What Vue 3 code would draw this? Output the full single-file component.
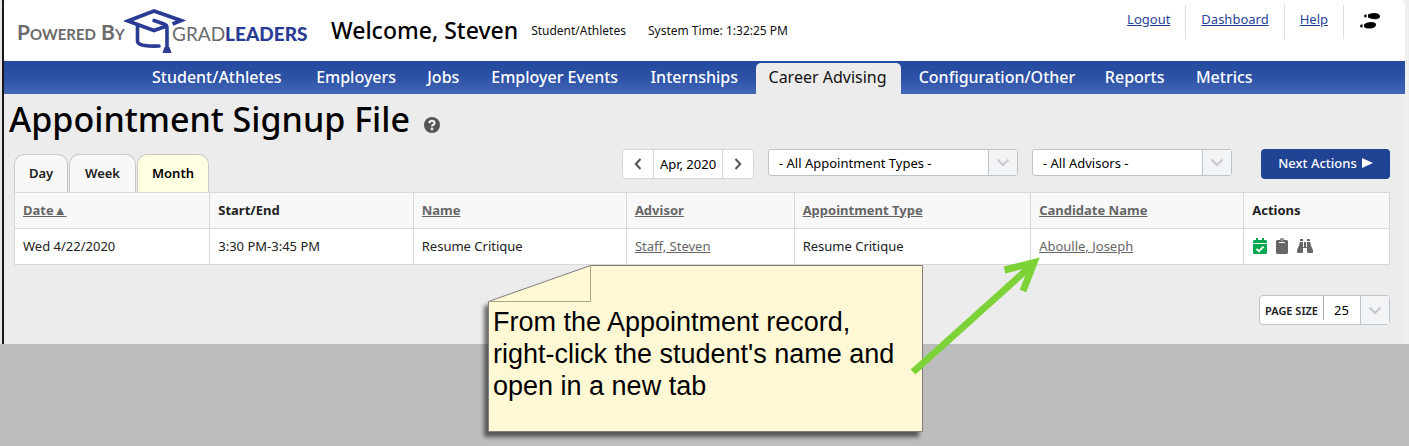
<script setup>
import { ref } from 'vue'

const navItems = ['Student/Athletes', 'Employers', 'Jobs', 'Employer Events', 'Internships', 'Career Advising', 'Configuration/Other', 'Reports', 'Metrics']
const activeNav = 'Career Advising'
const view = ref('Month')
const views = ['Day', 'Week', 'Month']
const columns = [
  { label: 'Date▲', sortable: true },
  { label: 'Start/End', sortable: false },
  { label: 'Name', sortable: true },
  { label: 'Advisor', sortable: true },
  { label: 'Appointment Type', sortable: true },
  { label: 'Candidate Name', sortable: true },
  { label: 'Actions', sortable: false },
]
</script>

<template>
  <div class="page">
    <div class="window">
      <header class="top">
        <a class="brand" href="#">
          <span class="powered">Powered By</span>
          <svg class="cap" viewBox="0 0 62 48" aria-hidden="true">
            <g fill="none" stroke="#2a3b94" stroke-width="3.6">
              <path d="M48.500 17L57 13.500L30 4L4 14L30 23.500L42.500 19" stroke-linejoin="miter" />
              <path d="M30 13.500L40 17Q43 18 43 21V41" stroke-linecap="round" />
              <path d="M13.500 18V34Q13.500 37 19 38.200Q27 39.500 35 39" stroke-linecap="round" />
            </g>
            <path d="M40.500 40H45.500L47.500 46H38.500Z" fill="#2a3b94" />
          </svg>
          <span class="wordmark">GRAD<b>LEADERS</b></span>
        </a>
        <strong class="welcome">Welcome, Steven</strong>
        <span class="meta">Student/Athletes</span>
        <span class="meta">System Time: 1:32:25 PM</span>
        <div class="links">
          <a href="#">Logout</a>
          <a href="#">Dashboard</a>
          <a href="#">Help</a>
          <a href="#" aria-label="Site tour">
            <svg class="steps" viewBox="0 0 22 18" aria-hidden="true">
              <path d="M9 2.500Q11 1 15 1Q21 1.300 21 4.500Q20.500 7.300 16 7.300Q12 7 9 5.500Z" />
              <path d="M7.500 2.300V5.500Q5 5.500 5 4Q5 2.500 7.500 2.300Z" />
              <path d="M5 12.300Q8 10 12 10Q17 10 17 12.500Q17 16 11.500 16.500Q7.500 16.800 5 15.300Z" />
              <path d="M3.500 12.300V15.500Q1 15.500 1 14Q1 12.500 3.500 12.300Z" />
            </svg>
          </a>
        </div>
      </header>

      <nav class="nav">
        <a v-for="item in navItems" :key="item" href="#" :class="{ active: item === activeNav }">{{ item }}</a>
      </nav>

      <main class="content">
        <div class="heading">
          <h1>Appointment Signup File</h1>
          <button class="help" aria-label="Page help">
            <svg viewBox="0 0 16 16" aria-hidden="true">
              <circle cx="8" cy="8" r="8" fill="#545454" />
              <path d="M5.200 6.200Q5.600 3.900 8 3.900Q10.500 3.900 10.500 6Q10.500 7.200 9 8Q8 8.600 8 9.500" fill="none" stroke="#ececec" stroke-width="2.200" />
              <circle cx="8" cy="12" r="1.400" fill="#ececec" />
            </svg>
          </button>
        </div>

        <div class="toolbar">
          <div class="tabs">
            <button v-for="v in views" :key="v" :class="{ on: v === view }" @click="view = v">{{ v }}</button>
          </div>
          <div class="filters">
            <div class="month">
              <button aria-label="Previous month"><svg viewBox="0 0 8 12"><path d="M6.500 1L1.800 6L6.500 11" /></svg></button>
              <span>Apr, 2020</span>
              <button aria-label="Next month"><svg viewBox="0 0 8 12"><path d="M1.500 1L6.200 6L1.500 11" /></svg></button>
            </div>
            <div class="select types">
              <select aria-label="Appointment type"><option>- All Appointment Types -</option></select>
              <span class="drop"><svg viewBox="0 0 14 9"><path d="M1.500 1.500L7 7L12.500 1.500" /></svg></span>
            </div>
            <div class="select advisors">
              <select aria-label="Advisor"><option>- All Advisors -</option></select>
              <span class="drop"><svg viewBox="0 0 14 9"><path d="M1.500 1.500L7 7L12.500 1.500" /></svg></span>
            </div>
            <button class="next">Next Actions <svg viewBox="0 0 11 10" aria-hidden="true"><path d="M0 0L11 5L0 10Z" /></svg></button>
          </div>
        </div>

        <table>
          <thead>
            <tr>
              <th v-for="c in columns" :key="c.label" scope="col">
                <a v-if="c.sortable" href="#">{{ c.label }}</a>
                <template v-else>{{ c.label }}</template>
              </th>
            </tr>
          </thead>
          <tbody>
            <tr>
              <td>Wed 4/22/2020</td>
              <td>3:30 PM-3:45 PM</td>
              <td>Resume Critique</td>
              <td><a href="#">Staff, Steven</a></td>
              <td>Resume Critique</td>
              <td><a href="#">Aboulle, Joseph</a></td>
              <td>
                <div class="actions">
                  <button aria-label="Check in">
                    <svg viewBox="0 0 448 512" fill="#05a84e"><path d="M436 160H12c-6.600 0-12-5.400-12-12v-36c0-26.500 21.500-48 48-48h48V12c0-6.600 5.400-12 12-12h40c6.600 0 12 5.400 12 12v52h128V12c0-6.600 5.400-12 12-12h40c6.600 0 12 5.400 12 12v52h48c26.500 0 48 21.500 48 48v36c0 6.600-5.400 12-12 12zM12 192h424c6.600 0 12 5.400 12 12v260c0 26.500-21.500 48-48 48H48c-26.500 0-48-21.500-48-48V204c0-6.600 5.400-12 12-12z" /><path d="M110 350L190 425L340 275" fill="none" stroke="#fff" stroke-width="60" /></svg>
                  </button>
                  <button aria-label="Notes">
                    <svg viewBox="0 0 384 512" fill="#666"><path d="M336 64h-80c0-35.300-28.700-64-64-64s-64 28.700-64 64H48C21.500 64 0 85.500 0 112v352c0 26.500 21.500 48 48 48h288c26.500 0 48-21.500 48-48V112c0-26.500-21.500-48-48-48z" /><path fill="#fff" d="M192 40c13.300 0 24 10.700 24 24s-10.700 24-24 24-24-10.700-24-24 10.700-24 24-24zm96 114c0 3.300-2.700 6-6 6H102c-3.300 0-6-2.700-6-6v-20c0-3.300 2.700-6 6-6h180c3.300 0 6 2.700 6 6z" /></svg>
                  </button>
                  <button aria-label="View details">
                    <svg viewBox="0 0 512 512" fill="#666"><path d="M104 32h88v64H96V40zM320 32h88l8 64H320zM88 128H192V288H224V128H288V288H320V128H424Q430 230 475 300Q512 355 512 420V448Q512 480 480 480H352Q320 480 320 448V320H192V448Q192 480 160 480H32Q0 480 0 448V420Q0 355 37 300Q82 230 88 128Z" /></svg>
                  </button>
                </div>
              </td>
            </tr>
          </tbody>
        </table>

        <div class="pager">
          <label for="page-size">PAGE SIZE</label>
          <select id="page-size"><option>25</option></select>
          <span class="drop"><svg viewBox="0 0 14 9"><path d="M1.500 1.500L7 7L12.500 1.500" /></svg></span>
        </div>
      </main>
    </div>

    <aside class="note">
      <svg class="paper" viewBox="0 0 436 169" aria-hidden="true">
        <path d="M102.500 .500H434.500V166.500H.500V36.500Z" fill="#fff8d5" stroke="#7f7f7f" />
        <path d="M102.500 .500V36.500H.500" fill="none" stroke="#aaa68f" />
      </svg>
      <p>From the Appointment record, right-click the student's name and open in a new tab</p>
    </aside>
    <svg class="arrow" viewBox="0 0 132 122" aria-hidden="true">
      <g fill="none" stroke="#7dd237" stroke-width="7">
        <path d="M3 119L122 12" />
        <path d="M94.500 17L124 9.500L113 38" stroke-miterlimit="8" />
      </g>
    </svg>
  </div>
</template>

<style>
body { background: #bdbdbd; }
</style>

<style scoped>
.page {
  position: relative;
  min-height: 100vh;
  background: #bdbdbd;
  font-family: "Noto Sans", sans-serif;
  font-size: 13px;
  line-height: 20px;
  color: #212121;
}
.page, .page * { box-sizing: border-box; }
.window {
  margin-left: 2px;
  padding-right: 4px;
  border-left: 2px solid #181818;
  background: #efefef;
  box-shadow: -2px 0 #e6e6e6;
}
button, select { font: inherit; color: inherit; margin: 0; }
button { padding: 0; border: 0; background: none; cursor: pointer; }
svg { display: block; }
.top {
  display: flex;
  align-items: center;
  height: 61px;
  padding-left: 13px;
  background: #fff;
  border-radius: 4px;
}
.brand {
  display: flex;
  align-items: center;
  width: 314px;
  text-decoration: none;
  white-space: nowrap;
}
.powered {
  width: 107px;
  padding-top: 2px;
  font: 700 21px/24px Lato, sans-serif;
  font-variant: small-caps;
  color: #6b6b6b;
}
.cap { width: 62px; height: 48px; flex: none; margin-right: -14px; }
.wordmark { font: 400 19px/24px Lato, sans-serif; color: #6b6b6b; padding-top: 6px; }
.wordmark b { font-weight: 900; color: #2a3b94; }
.welcome { font-size: 23px; font-weight: 500; color: #000; line-height: 32px; margin-right: 13px; padding-bottom: 2px; white-space: nowrap; }
.meta { font-size: 12px; color: #111; margin-right: 22px; white-space: nowrap; }
.links { display: flex; align-self: flex-start; margin: 5px 10px 0 auto; }
.links a { height: 34px; padding: 4px 15px 0; color: #1f4396; border-left: 1px solid #ddd; }
.links a:first-child { border-left: 0; }
.links a:last-child { padding-right: 14px; }
.steps { width: 22px; height: 18px; margin-top: 3px; fill: #000; }
.nav {
  display: grid;
  grid-template-columns: 159fr 106fr 59fr 154fr 113fr 145fr 181fr 86fr 80fr;
  column-gap: 5px;
  height: 33px;
  padding: 2px 142px 0 135px;
  background: linear-gradient(#234a9c, #2c51a5 50%, #4467b8);
}
.nav a {
  padding-left: 13px;
  font-size: 16px;
  font-weight: 500;
  line-height: 28px;
  color: #fff;
  text-decoration: none;
  white-space: nowrap;
}
.nav .active { background: #ececec; color: #111; font-weight: 400; border-radius: 5px 5px 0 0; }
.content { height: 250px; padding: 0 15px 0 10px; background: #ececec; }
.heading { display: flex; align-items: center; height: 54px; margin-left: -5px; }
h1 { margin: 0; padding-bottom: 5px; font-size: 34px; font-weight: 500; line-height: 48px; color: #000; }
.help { margin: 8px 0 0 14px; }
.help svg { width: 16px; height: 16px; }
.toolbar { display: flex; justify-content: space-between; height: 44px; }
.tabs { display: flex; gap: 1px; height: 38px; align-self: flex-end; }
.tabs button {
  width: 54px;
  padding-bottom: 2px;
  border: 1px solid #c8c8c8;
  border-bottom: 0;
  border-radius: 10px 10px 0 0;
  background: #f8f8f8;
  font-weight: 600;
}
.tabs button:nth-child(2) { width: 67px; }
.tabs .on { width: 72px; background: #ffffe1; color: #000; }
.filters { display: flex; align-items: flex-start; padding-top: 1px; }
.month {
  display: flex;
  width: 132px;
  height: 30px;
  margin-right: 14px;
  border: 1px solid #d6d6d6;
  border-radius: 4px;
  background: #fff;
  color: #000;
}
.month button { display: grid; place-items: center; width: 30px; }
.month span { flex: 1; border: solid #d6d6d6; border-width: 0 1px; text-align: center; line-height: 28px; }
.month svg { width: 8px; height: 12px; fill: none; stroke: #555; stroke-width: 2; }
.select { display: flex; height: 27px; margin-right: 14px; border: 1px solid #bcc4cb; border-radius: 3px; background: #fff; }
.types { width: 250px; }
.advisors { width: 200px; margin-right: 29px; }
select { flex: 1; min-width: 0; padding: 0 10px; border: 0; background: none; appearance: none; color: #000; }
.drop { display: grid; place-items: center; width: 29px; border-left: 1px solid #bcc4cb; background: #f2f4f6; }
.drop svg { width: 14px; height: 9px; fill: none; stroke: #c3c9ce; stroke-width: 2; }
.next {
  display: flex;
  align-items: center;
  justify-content: center;
  gap: 5px;
  width: 129px;
  height: 30px;
  padding-bottom: 2px;
  border-radius: 4px;
  background: #214394;
  color: #fff;
  font-weight: 500;
}
.next svg { width: 11px; height: 10px; fill: #fff; }
table { width: 100%; border-collapse: collapse; table-layout: fixed; background: #fff; }
th, td { height: 36px; padding: 0 8px 2px; border: 1px solid #d8d8d8; text-align: left; }
th { background: #f8f8f8; font-weight: 700; }
th:nth-child(1) { width: 14.2%; }
th:nth-child(2) { width: 14.8%; }
th:nth-child(3) { width: 15.5%; }
th:nth-child(4) { width: 12.2%; }
th:nth-child(5) { width: 17.2%; }
th:nth-child(6) { width: 15.5%; }
th a, td a { color: #666; }
.actions { display: flex; align-items: center; gap: 9px; padding-left: 1px; }
.actions svg { height: 16px; width: auto; }
.pager {
  display: flex;
  width: 131px;
  height: 30px;
  margin: 30px 0 0 auto;
  border: 1px solid #bcc4cb;
  border-radius: 4px;
  background: #fff;
}
.pager label { width: 64px; height: 24px; padding-left: 5px; border-right: 1px solid #aaa; font-size: 11px; font-weight: 600; line-height: 29px; white-space: nowrap; }
.note { position: absolute; left: 488px; top: 265px; width: 436px; height: 169px; color: #000; }
.paper { position: absolute; inset: 0; width: 436px; height: 169px; filter: drop-shadow(-4px 5px 2px rgba(0, 0, 0, .55)); }
.note p { position: relative; margin: 0; padding: 41px 8px 0 5px; font: 27px/32px "Liberation Sans", Arial, sans-serif; }
.arrow { position: absolute; left: 910px; top: 253px; width: 132px; height: 122px; pointer-events: none; }
</style>
